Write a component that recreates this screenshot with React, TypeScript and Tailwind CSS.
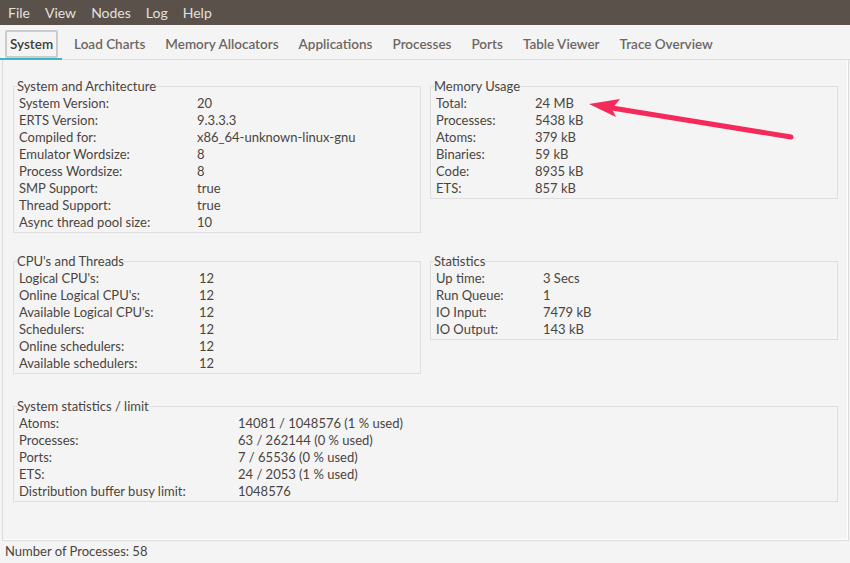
import React from "react";

const font = "font-['Lato','Liberation_Sans',sans-serif]";

const menus = ["File", "View", "Nodes", "Log", "Help"];
const tabs = [
  "System",
  "Load Charts",
  "Memory Allocators",
  "Applications",
  "Processes",
  "Ports",
  "Table Viewer",
  "Trace Overview",
];

type Row = [string, string];

const sysArch: Row[] = [
  ["System Version:", "20"],
  ["ERTS Version:", "9.3.3.3"],
  ["Compiled for:", "x86_64-unknown-linux-gnu"],
  ["Emulator Wordsize:", "8"],
  ["Process Wordsize:", "8"],
  ["SMP Support:", "true"],
  ["Thread Support:", "true"],
  ["Async thread pool size:", "10"],
];

const memory: Row[] = [
  ["Total:", "24 MB"],
  ["Processes:", "5438 kB"],
  ["Atoms:", "379 kB"],
  ["Binaries:", "59 kB"],
  ["Code:", "8935 kB"],
  ["ETS:", "857 kB"],
];

const cpus: Row[] = [
  ["Logical CPU's:", "12"],
  ["Online Logical CPU's:", "12"],
  ["Available Logical CPU's:", "12"],
  ["Schedulers:", "12"],
  ["Online schedulers:", "12"],
  ["Available schedulers:", "12"],
];

const stats: Row[] = [
  ["Up time:", "3 Secs"],
  ["Run Queue:", "1"],
  ["IO Input:", "7479 kB"],
  ["IO Output:", "143 kB"],
];

const limits: Row[] = [
  ["Atoms:", "14081 / 1048576 (1 % used)"],
  ["Processes:", "63 / 262144 (0 % used)"],
  ["Ports:", "7 / 65536 (0 % used)"],
  ["ETS:", "24 / 2053 (1 % used)"],
  ["Distribution buffer busy limit:", "1048576"],
];

const GroupBox = ({
  title,
  rows,
  labelWidth,
  className = "",
}: {
  title: string;
  rows: Row[];
  labelWidth: string;
  className?: string;
}) => (
  <fieldset className={`border border-[#dedede] pb-[1px] ${className}`}>
    <legend className="ml-[3px] leading-[16px]">{title}</legend>
    <div className="pl-[5px] pt-[1px]">
      {rows.map(([k, v]) => (
        <div key={k} className="flex h-[17px] items-center">
          <span className={`${labelWidth} shrink-0`}>{k}</span>
          <span>{v}</span>
        </div>
      ))}
    </div>
  </fieldset>
);

export default function App() {
  return (
    <div
      className={`relative flex h-[563px] w-[850px] flex-col overflow-hidden bg-[#f4f4f4] text-[13px] text-[#4a4440] ${font}`}
    >
      {/* menu bar */}
      <div className="flex h-[25px] items-center bg-[#5a514b] pl-[8px] text-[14px] text-[#e4e0dc]">
        {menus.map((m) => (
          <span key={m} className="mr-[15px]">
            {m}
          </span>
        ))}
      </div>

      {/* tabs */}
      <div className="relative flex h-[35px] items-center border-b border-[#dddddd] pl-[5px] pt-[4px] text-[13.5px] font-semibold text-[#6c6763]">
        {tabs.map((t, i) =>
          i === 0 ? (
            <span
              key={t}
              className="mr-[16px] rounded-[2px] border-2 border-[#cccccc] px-[3px] py-[2px] text-[#3f3a36]"
            >
              {t}
            </span>
          ) : (
            <span key={t} className="mr-[20px]">
              {t}
            </span>
          )
        )}
        <div className="absolute bottom-[-1px] left-0 h-[2px] w-[62px] bg-[#3db5c7]" />
      </div>

      {/* main panel */}
      <div className="ml-[2px] mr-[1px] flex-1 border border-t-0 border-[#dcdcdc] px-[10px] pt-[18px] shadow-[inset_-1px_-1px_0_#ffffff]">
        <div className="grid grid-cols-[408px_408px] items-start gap-x-[9px]">
          <GroupBox title="System and Architecture" rows={sysArch} labelWidth="w-[178px]" />
          <GroupBox title="Memory Usage" rows={memory} labelWidth="w-[99px]" />
        </div>
        <div className="mt-[20px] grid grid-cols-[408px_408px] items-start gap-x-[9px]">
          <GroupBox title="CPU's and Threads" rows={cpus} labelWidth="w-[180px]" />
          <GroupBox title="Statistics" rows={stats} labelWidth="w-[107px]" />
        </div>
        <GroupBox
          title="System statistics / limit"
          rows={limits}
          labelWidth="w-[219px]"
          className="mt-[24px] w-[825px]"
        />
      </div>

      {/* status bar */}
      <div className="flex h-[22px] items-center pl-[5px]">Number of Processes: 58</div>

      {/* annotation arrow */}
      <svg
        className="pointer-events-none absolute left-0 top-0"
        width="850"
        height="563"
        viewBox="0 0 850 563"
      >
        <line x1="791" y1="137" x2="612" y2="108" stroke="#f5295a" strokeWidth="5" strokeLinecap="round" />
        <polygon points="589,104 620,99 612,109 616,117" fill="#f5295a" />
      </svg>
    </div>
  );
}
